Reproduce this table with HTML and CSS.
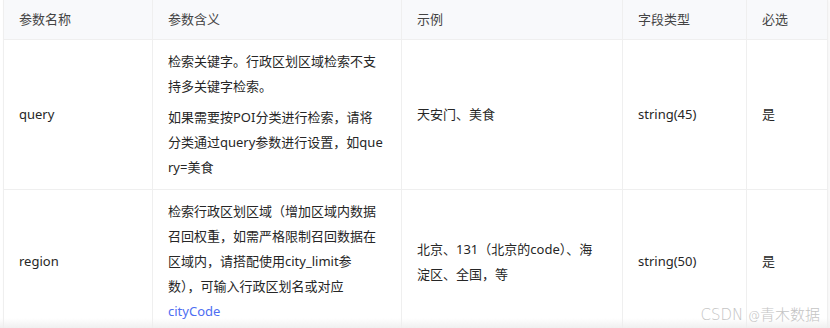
FILE: index.html
```html
<!DOCTYPE html>
<html lang="zh">
<head>
<meta charset="utf-8">
<link rel="stylesheet" href="styles.css">
</head>
<body>
<div class="page">
  <div class="wrap">
    <table class="params">
      <colgroup>
        <col class="c1"><col class="c2"><col class="c3"><col class="c4"><col class="c5">
      </colgroup>
      <thead>
        <tr><th>参数名称</th><th>参数含义</th><th>示例</th><th>字段类型</th><th>必选</th></tr>
      </thead>
      <tbody>
        <tr>
          <td>query</td>
          <td>
            <p>检索关键字。行政区划区域检索不支<br>持多关键字检索。</p>
            <p>如果需要按POI分类进行检索，请将<br>分类通过query参数进行设置，如que<br>ry=美食</p>
          </td>
          <td>天安门、美食</td>
          <td>string(45)</td>
          <td>是</td>
        </tr>
        <tr>
          <td>region</td>
          <td>
            <p>检索行政区划区域（增加区域内数据<br>召回权重，如需严格限制召回数据在<br>区域内，请搭配使用city_limit参<br>数），可输入行政区划名或对应<br><a class="link">cityCode</a></p>
          </td>
          <td>北京、131（北京的code）、海<br>淀区、全国，等</td>
          <td>string(50)</td>
          <td>是</td>
        </tr>
      </tbody>
    </table>
  </div>
  <div class="fade"></div>
  <div class="watermark">CSDN <span class="at">@</span>青木数据</div>
</div>
</body>
</html>
```

FILE: styles.css
```css
html, body {
  margin: 0;
  padding: 0;
  background: #ffffff;
}
.page {
  position: relative;
  width: 830px;
  height: 328px;
  overflow: hidden;
  font-family: "Noto Sans", "Noto Sans CJK SC", sans-serif;
  font-size: 13px;
  color: #262626;
}
.wrap {
  margin: -1px 0 0 3px;
  width: 824px;
  box-shadow: 2px 0 4px rgba(0, 0, 0, 0.06);
}
.params {
  width: 824px;
  table-layout: fixed;
  border-collapse: collapse;
}
.c1 { width: 149px; }
.c2 { width: 249px; }
.c3 { width: 221px; }
.c4 { width: 124px; }
.c5 { width: 81px; }
.params th,
.params td {
  border: 1px solid #efefef;
  padding: 9px 15px;
  text-align: left;
  vertical-align: middle;
  line-height: 25px;
}
.params th {
  height: 40px;
  padding-top: 0;
  padding-bottom: 0;
  box-sizing: border-box;
  background: #f8f9fb;
  font-weight: normal;
  color: #444444;
}
.params p {
  margin: 0;
}
.params p + p {
  margin-top: 6px;
}
.link {
  color: #4e6ef2;
}
.fade {
  position: absolute;
  left: 0;
  right: 0;
  bottom: 0;
  height: 10px;
  background: linear-gradient(to bottom, rgba(245,245,245,0), rgba(238,238,238,0.9));
}
.watermark {
  position: absolute;
  right: 10px;
  bottom: 4px;
  font-family: "DejaVu Sans", "Noto Sans CJK SC", sans-serif;
  font-size: 15px;
  font-weight: 300;
  color: #c4c4c4;
}
.watermark .at {
  font-size: 12px;
}
```
